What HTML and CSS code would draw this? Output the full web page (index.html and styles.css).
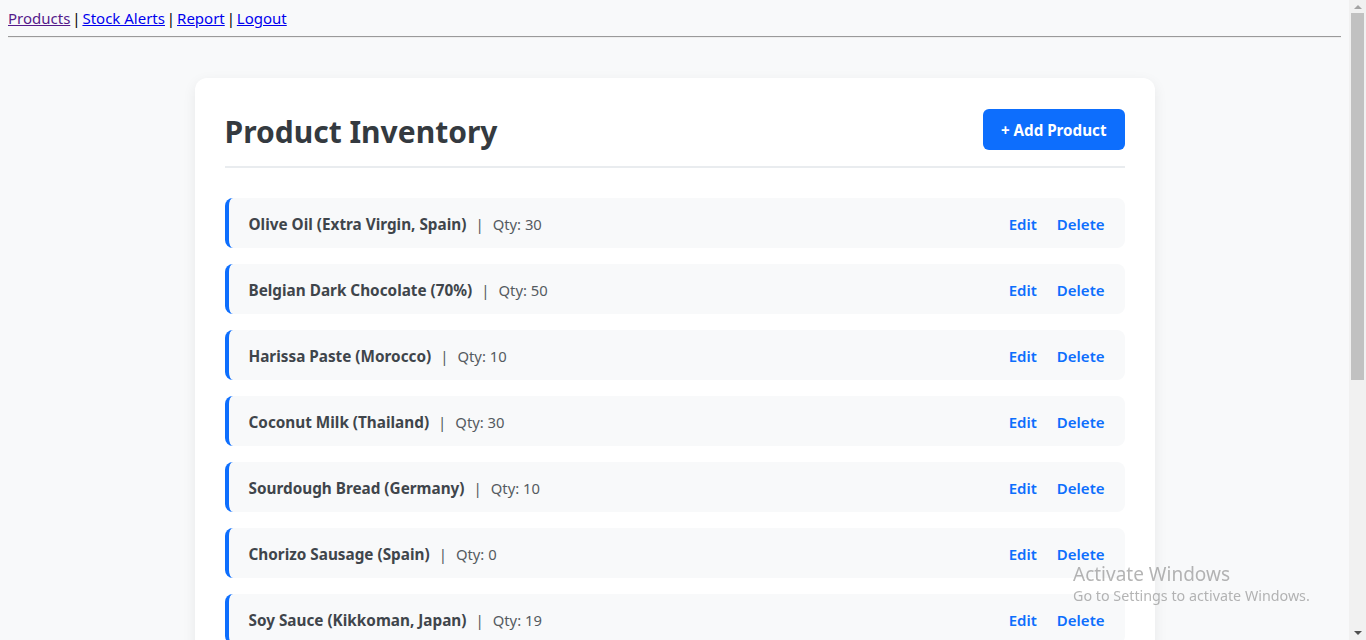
FILE: index.html
```html
<!DOCTYPE html>
<html lang="en">
<head>
<meta charset="utf-8">
<title>Product Inventory</title>
<link rel="stylesheet" href="styles.css">
</head>
<body>
<nav class="topnav">
  <a class="visited" href="#">Products</a> | <a href="#">Stock Alerts</a> | <a href="#">Report</a> | <a href="#">Logout</a>
</nav>
<hr>
<main class="card">
  <header class="card-header">
    <h1 class="title">Product Inventory</h1>
    <a class="btn-add" href="#">+ Add Product</a>
  </header>
  <ul class="product-list">
    <li class="product"><div class="info"><span class="name">Olive Oil (Extra Virgin, Spain)</span><span class="sep">|</span><span class="qty">Qty: 30</span></div><div class="actions"><a href="#">Edit</a><a href="#">Delete</a></div></li>
    <li class="product"><div class="info"><span class="name">Belgian Dark Chocolate (70%)</span><span class="sep">|</span><span class="qty">Qty: 50</span></div><div class="actions"><a href="#">Edit</a><a href="#">Delete</a></div></li>
    <li class="product"><div class="info"><span class="name">Harissa Paste (Morocco)</span><span class="sep">|</span><span class="qty">Qty: 10</span></div><div class="actions"><a href="#">Edit</a><a href="#">Delete</a></div></li>
    <li class="product"><div class="info"><span class="name">Coconut Milk (Thailand)</span><span class="sep">|</span><span class="qty">Qty: 30</span></div><div class="actions"><a href="#">Edit</a><a href="#">Delete</a></div></li>
    <li class="product"><div class="info"><span class="name">Sourdough Bread (Germany)</span><span class="sep">|</span><span class="qty">Qty: 10</span></div><div class="actions"><a href="#">Edit</a><a href="#">Delete</a></div></li>
    <li class="product"><div class="info"><span class="name">Chorizo Sausage (Spain)</span><span class="sep">|</span><span class="qty">Qty: 0</span></div><div class="actions"><a href="#">Edit</a><a href="#">Delete</a></div></li>
    <li class="product"><div class="info"><span class="name">Soy Sauce (Kikkoman, Japan)</span><span class="sep">|</span><span class="qty">Qty: 19</span></div><div class="actions"><a href="#">Edit</a><a href="#">Delete</a></div></li>
    <li class="product"><div class="info"><span class="name">Basmati Rice (India)</span><span class="sep">|</span><span class="qty">Qty: 25</span></div><div class="actions"><a href="#">Edit</a><a href="#">Delete</a></div></li>
    <li class="product"><div class="info"><span class="name">Maple Syrup (Canada)</span><span class="sep">|</span><span class="qty">Qty: 15</span></div><div class="actions"><a href="#">Edit</a><a href="#">Delete</a></div></li>
  </ul>
</main>
<div class="scrollbar" aria-hidden="true">
  <span class="sb-arrow sb-up"></span>
  <span class="sb-thumb"></span>
  <span class="sb-arrow sb-down"></span>
</div>
<div class="watermark">
  <div class="wm-title">Activate Windows</div>
  <div class="wm-sub">Go to Settings to activate Windows.</div>
</div>
</body>
</html>
```
FILE: styles.css
```css
html {
  background: #f8f9fa;
}
body {
  margin: 8px 25px 8px 8px;
  font-family: "Noto Sans", "Open Sans", sans-serif;
  font-size: 15px;
  color: #000;
}
.topnav {
  line-height: 20px;
  word-spacing: -2px;
}
.topnav a {
  color: #0000ee;
  word-spacing: normal;
}
.topnav a.visited {
  color: #551a8b;
}
hr {
  margin: 8px 0;
  border: 0;
  border-top: 1px solid #9a9a9a;
  border-bottom: 1px solid #eeeeee;
}
.card {
  display: block;
  max-width: 900px;
  margin: 40px auto 0;
  padding: 30px;
  background: #ffffff;
  border-radius: 12px;
  box-shadow: 0 4px 14px rgba(0, 0, 0, 0.07);
}
.card-header {
  display: flex;
  align-items: center;
  justify-content: space-between;
  padding-bottom: 15px;
  border-bottom: 2px solid #e9ecef;
  margin-bottom: 30px;
}
.title {
  margin: 0;
  padding-top: 4px;
  font-size: 30px;
  line-height: 39px;
  font-weight: 700;
  color: #343a40;
}
.btn-add {
  display: inline-block;
  background: #0d6efd;
  color: #ffffff;
  text-decoration: none;
  font-weight: 700;
  font-size: 15.2px;
  padding: 11px 18px 9px;
  border-radius: 6px;
  line-height: 21px;
}
.product-list {
  list-style: none;
  margin: 0;
  padding: 0;
  display: flex;
  flex-direction: column;
  gap: 16px;
}
.product {
  display: flex;
  align-items: center;
  justify-content: space-between;
  background: #f8f9fa;
  border-left: 4px solid #0d6efd;
  border-radius: 8px;
  padding: 16px 20px 14px;
  line-height: 20px;
}
.name {
  font-weight: 700;
  font-size: 15.3px;
  color: #3f454b;
}
.sep {
  margin: 0 9px;
  color: #555b61;
  font-size: 15px;
}
.qty {
  color: #555b61;
  font-size: 14.8px;
}
.actions {
  display: flex;
  gap: 20px;
}
.actions a {
  color: #0d6efd;
  text-decoration: none;
  font-weight: 600;
  font-size: 15px;
}
.scrollbar {
  position: fixed;
  top: 0;
  right: 0;
  width: 17px;
  height: 100%;
  background: #f1f1f1;
  display: flex;
  flex-direction: column;
  align-items: center;
}
.sb-arrow {
  width: 0;
  height: 0;
  border-left: 4px solid transparent;
  border-right: 4px solid transparent;
}
.sb-up {
  margin-top: 5px;
  border-bottom: 4px solid #a3a3a3;
}
.sb-thumb {
  margin-top: 4px;
  width: 13px;
  height: 367px;
  background: #c1c1c1;
}
.sb-down {
  margin-top: auto;
  margin-bottom: 5px;
  border-top: 4px solid #505050;
}
.watermark {
  position: fixed;
  left: 1073px;
  top: 562px;
  color: rgba(120, 120, 120, 0.55);
  pointer-events: none;
}
.wm-title {
  font-size: 19px;
  line-height: 24px;
}
.wm-sub {
  font-size: 14.3px;
  line-height: 20px;
}
```
